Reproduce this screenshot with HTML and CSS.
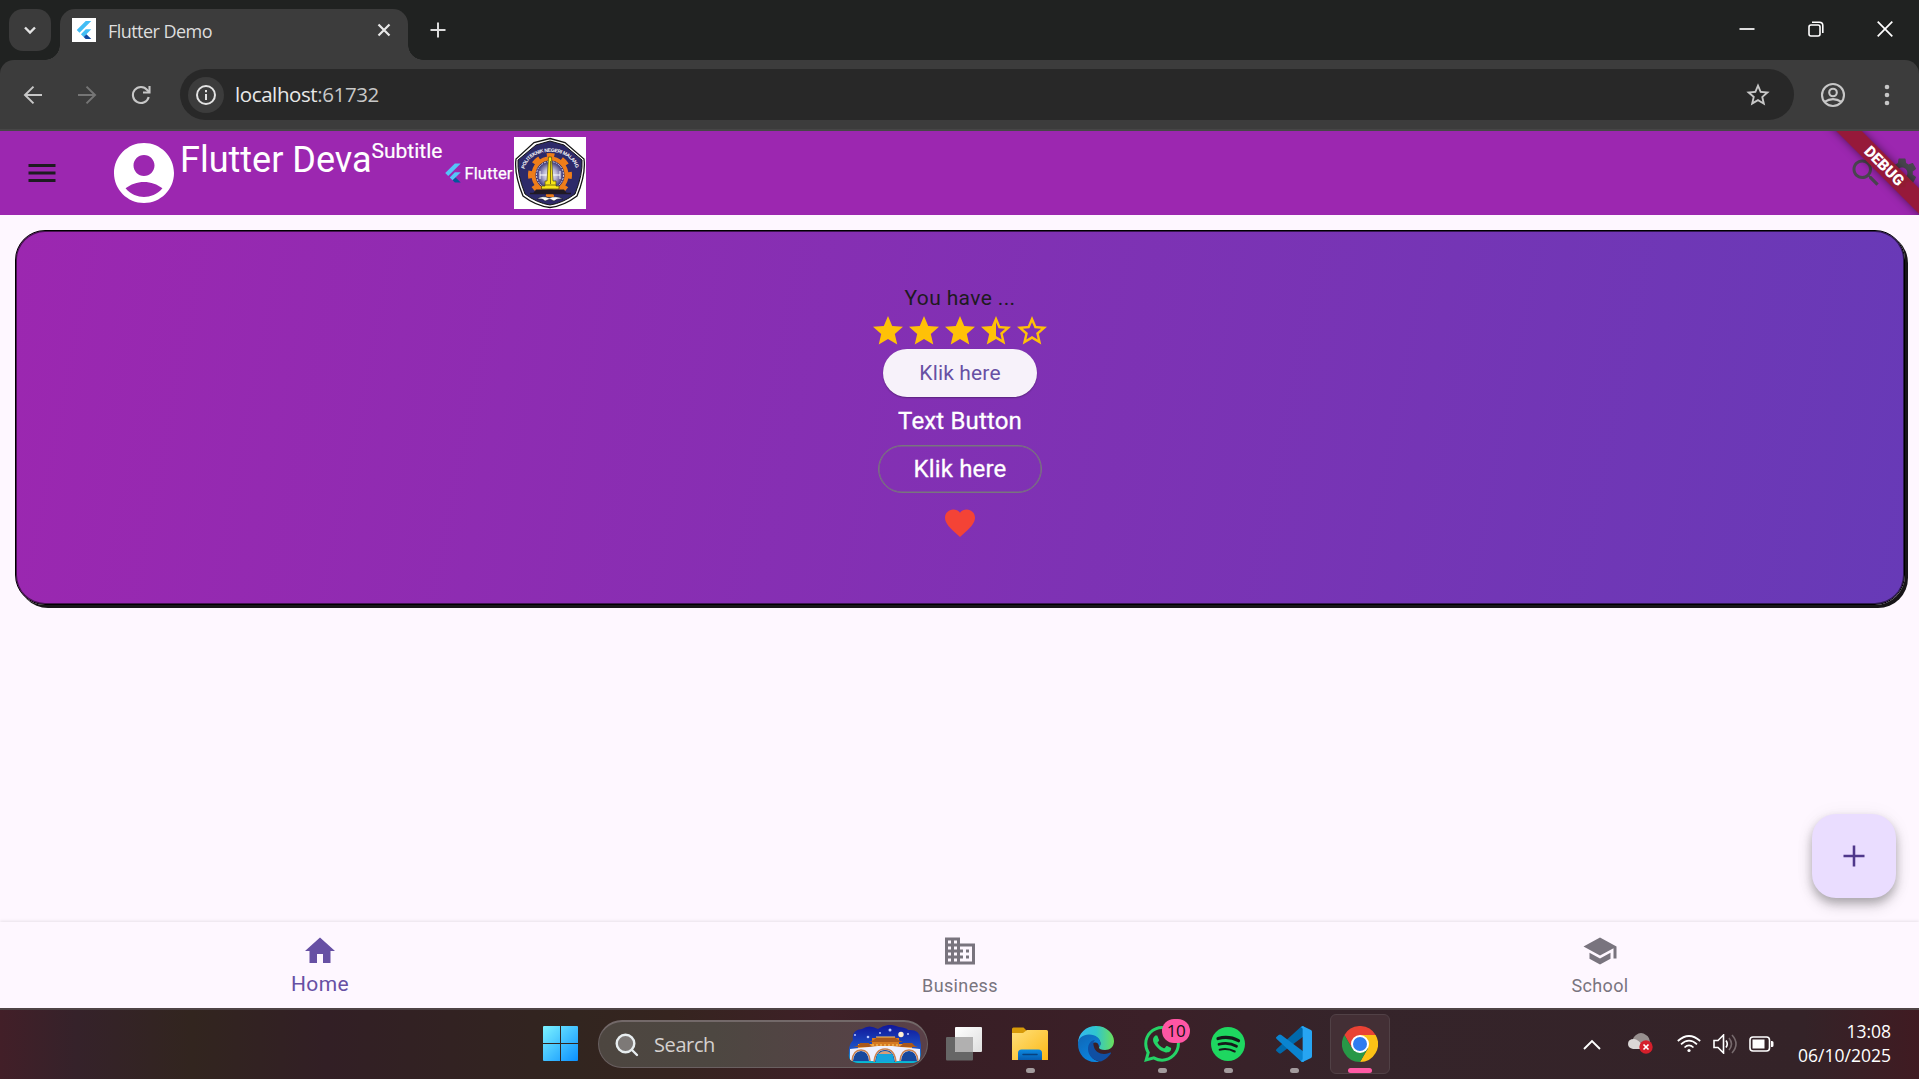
FILE: index.html
```html
<!DOCTYPE html>
<html lang="en">
<head>
<meta charset="utf-8">
<title>Flutter Demo</title>
<link rel="stylesheet" href="styles.css">
</head>
<body>
<div class="screen">
  <header class="tabs">
    <div class="tab-search"><svg width="14" height="14" viewBox="0 0 14 14"><path d="M2 4.5 7 9.5 12 4.5" fill="none" stroke="#e3e3e3" stroke-width="2.4"/></svg></div>
    <div class="tab">
      <span class="favicon"><svg width="18" height="18" viewBox="0 0 24 24"><path fill="#42bdf5" d="M14.3 0 2.3 12 6 15.7 21.7 0zM14.3 11.1 7.9 17.5l3.7 3.7L21.7 11.1z"/><path fill="#0d47a1" d="m11.6 21.2 2.7 2.8h7.4l-6.5-6.5z"/></svg></span>
      <span class="tab-title">Flutter Demo</span>
      <svg class="tab-close" width="14" height="14" viewBox="0 0 14 14"><path d="m1.500 1.500 11 11m0-11-11 11" stroke="#e8e8e8" stroke-width="2.200"/></svg>
    </div>
    <svg class="new-tab" width="16" height="16" viewBox="0 0 16 16"><path d="M8 .5v15M.5 8h15" stroke="#dcdcdc" stroke-width="2"/></svg>
    <div class="window-controls">
      <svg width="16" height="16" viewBox="0 0 16 16"><path d="M.5 8h15" stroke="#fff" stroke-width="1.700"/></svg>
      <svg width="16" height="16" viewBox="0 0 16 16" fill="none" stroke="#fff" stroke-width="1.600"><rect x="1" y="4" width="11" height="11" rx="2"/><path d="M4 1.300h7.500q3.300 0 3.300 3.300V12"/></svg>
      <svg width="16" height="16" viewBox="0 0 16 16"><path d="m.7.7 14.600 14.600m0-14.600L.7 15.300" stroke="#fff" stroke-width="1.700"/></svg>
    </div>
  </header>

  <nav class="toolbar">
    <svg class="tool" width="20" height="20" viewBox="0 0 20 20" fill="none" stroke="#c7c7c7" stroke-width="2"><path d="M19 10H2.500M10.500 1.600 2 10l8.500 8.400"/></svg>
    <svg class="tool" width="20" height="20" viewBox="0 0 20 20" fill="none" stroke="#757575" stroke-width="2"><path d="M1 10h16.500M9.500 1.600 18 10l-8.500 8.400"/></svg>
    <svg class="tool" width="20" height="20" viewBox="0 0 20 20" fill="none" stroke="#c7c7c7" stroke-width="2.100"><path d="M17.700 12A8 8 0 1 1 16.200 5l2 2"/><path d="M18.500 1v6.500H12"/></svg>
    <div class="address">
      <span class="site-info"><svg width="22" height="22" viewBox="0 0 22 22"><circle cx="11" cy="11" r="9" fill="none" stroke="#e3e3e3" stroke-width="2"/><path d="M11 10v6M11 6v2.200" stroke="#e3e3e3" stroke-width="2"/></svg></span>
      <span class="url">localhost<span class="port">:61732</span></span>
      <svg class="bookmark" width="28" height="28" viewBox="0 0 24 24" fill="#c7c7c7"><path d="m22 9.240-7.190-.62L12 2 9.190 8.630 2 9.240l5.460 4.730L5.820 21 12 17.270 18.180 21l-1.630-7.030L22 9.240zM12 15.400l-3.760 2.270 1-4.280-3.320-2.880 4.380-.38L12 6.100l1.710 4.040 4.380.38-3.320 2.880 1 4.280L12 15.400z"/></svg>
    </div>
    <svg class="profile" width="26" height="26" viewBox="0 0 26 26" fill="none" stroke="#c7c7c7" stroke-width="2.100"><circle cx="13" cy="13" r="11"/><circle cx="13" cy="10.500" r="3.800"/><path d="M4.500 19.800q8.500-5.400 17 0"/></svg>
    <svg class="more" width="6" height="22" viewBox="0 0 6 22" fill="#c7c7c7"><circle cx="3" cy="3" r="2.300"/><circle cx="3" cy="11" r="2.300"/><circle cx="3" cy="19" r="2.300"/></svg>
  </nav>

  <section class="appbar">
    <svg class="menu" width="36" height="36" viewBox="0 0 24 24" fill="#1d1b20"><path d="M3 18h18v-2H3v2zm0-5h18v-2H3v2zm0-7v2h18V6H3z"/></svg>
    <svg class="account" width="72" height="72" viewBox="0 0 24 24" fill="#fff"><path d="M12 2C6.480 2 2 6.480 2 12s4.480 10 10 10 10-4.480 10-10S17.520 2 12 2zm0 4c1.930 0 3.500 1.570 3.500 3.500S13.930 13 12 13s-3.500-1.570-3.500-3.500S10.070 6 12 6zm0 14c-2.030 0-4.430-.82-6.140-2.880C7.550 15.800 9.680 15 12 15s4.450.8 6.140 2.120C16.430 19.180 14.030 20 12 20z"/></svg>
    <span class="app-title">Flutter Deva</span>
    <span class="app-subtitle">Subtitle</span>
    <span class="brand"><svg width="16" height="20" viewBox="2 0 20 24"><path fill="#54c5f8" d="M14.300 0 2.300 12 6 15.700 21.700 0zM14.300 11.100 7.900 17.500l3.700 3.700L21.700 11.100z"/><path fill="#01579b" d="m11.600 21.200 2.700 2.800h7.400l-6.500-6.500z"/></svg><span class="brand-name">Flutter</span></span>
    <svg class="crest" width="72" height="72" viewBox="0 0 72 72">
      <defs>
        <path id="crest-arc" d="M10.500 32C15 9 57 9 62 32"/>
        <radialGradient id="globe"><stop offset="0" stop-color="#fff"/><stop offset=".5" stop-color="#b6b3d2"/><stop offset="1" stop-color="#393476"/></radialGradient>
      </defs>
      <rect width="72" height="72" fill="#fff"/>
      <path d="M36 1.500 51 5.500 70 22Q72 37 63 59 50 69 36 70.500 22 69 9 59 0 37 2 22L20 5.500Z" fill="#fff" stroke="#141414" stroke-width="1.300"/>
      <path d="M36 4 50 8 68 23Q69 37 61 57 49 66 36 68 23 66 11 57 3 37 4 23L22 8Z" fill="#2d2a69" stroke="#141414"/>
      <circle cx="36" cy="38" r="16" fill="none" stroke="#ee7d1a" stroke-width="5"/>
      <circle cx="36" cy="38" r="19.500" fill="none" stroke="#ee7d1a" stroke-width="5" stroke-dasharray="7.500 7.815" stroke-dashoffset="3.750"/>
      <circle cx="36" cy="38" r="14.500" fill="#2d2a69"/>
      <circle cx="36" cy="38" r="13.500" fill="url(#globe)" stroke="#fff" stroke-width=".8" stroke-dasharray="2 1"/>
      <path d="M26 34v8m0-4h20m0-4v8" stroke="#fff" fill="none"/>
      <path d="m34.500 20h3l1.500 24h3v5h3v3H27.500v-3H31v-5h2z" fill="#f8e518" stroke="#4e4710" stroke-width=".7"/>
      <path d="M36.500 24v23M31 48h11" stroke="#7d7210"/>
      <path d="M22 52.500h28l3 4H19z" fill="#201a24"/><path d="M16 56.500h41" stroke="#201a24" stroke-width="1.500"/>
      <path d="M23 62q5-4 12-1 7-3 14 1-6-1-9 2l-4-2-5 2q-2-3-8-2" fill="#fff" stroke="#111" stroke-width=".5"/>
      <path d="M33 59h7" stroke="#ee7d1a" stroke-width="1.500"/>
      <text class="crest-text"><textPath href="#crest-arc" textLength="66">POLITEKNIK NEGERI MALANG</textPath></text>
    </svg>
    <svg class="action-search" width="36" height="36" viewBox="0 0 24 24" fill="#49454f"><path d="M15.500 14h-.79l-.28-.27C15.410 12.590 16 11.110 16 9.500 16 5.910 13.090 3 9.500 3S3 5.910 3 9.500 5.910 16 9.500 16c1.610 0 3.090-.59 4.230-1.570l.27.28v.79l5 4.990L20.490 19l-4.990-5zm-6 0C7.010 14 5 11.990 5 9.500S7.010 5 9.500 5 14 7.010 14 9.500 11.990 14 9.500 14z"/></svg>
    <svg class="action-settings" width="36" height="36" viewBox="0 0 24 24" fill="#49454f"><path d="M19.140 12.940c.04-.3.060-.61.060-.94 0-.32-.02-.64-.07-.94l2.030-1.580c.18-.14.230-.41.120-.61l-1.920-3.320c-.12-.22-.37-.29-.59-.22l-2.390.960c-.5-.38-1.030-.7-1.620-.94l-.36-2.540c-.04-.24-.24-.41-.48-.41h-3.840c-.24 0-.43.170-.47.410l-.36 2.540c-.59.240-1.130.57-1.620.94l-2.390-.96c-.22-.08-.47 0-.59.220L2.740 8.870c-.12.210-.08.470.12.610l2.030 1.580c-.05.300-.09.630-.09.940s.02.640.07.940l-2.030 1.580c-.18.140-.23.410-.12.610l1.920 3.320c.12.220.37.290.59.220l2.390-.96c.5.380 1.030.7 1.620.94l.36 2.540c.05.240.24.410.48.410h3.840c.24 0 .44-.17.470-.41l.36-2.540c.59-.24 1.130-.56 1.620-.94l2.390.96c.22.080.47 0 .59-.22l1.920-3.320c.12-.22.070-.47-.12-.61l-2.010-1.580zM12 15.600c-1.980 0-3.600-1.620-3.600-3.600s1.620-3.600 3.600-3.600 3.600 1.620 3.600 3.600-1.620 3.600-3.600 3.600z"/></svg>
    <div class="ribbon-area"><div class="ribbon">DEBUG</div></div>
  </section>

  <main class="content">
    <section class="card">
      <p class="you-have">You have ...</p>
      <div class="stars">
        <svg width="36" height="36" viewBox="0 0 24 24"><path d="M12 17.270 18.180 21l-1.640-7.030L22 9.240l-7.190-.61L12 2 9.190 8.630 2 9.240l5.460 4.730L5.820 21z"/></svg>
        <svg width="36" height="36" viewBox="0 0 24 24"><path d="M12 17.270 18.180 21l-1.640-7.030L22 9.240l-7.190-.61L12 2 9.190 8.630 2 9.240l5.460 4.730L5.820 21z"/></svg>
        <svg width="36" height="36" viewBox="0 0 24 24"><path d="M12 17.270 18.180 21l-1.640-7.030L22 9.240l-7.190-.61L12 2 9.190 8.630 2 9.240l5.460 4.730L5.820 21z"/></svg>
        <svg width="36" height="36" viewBox="0 0 24 24"><path d="m22 9.240-7.190-.62L12 2 9.190 8.630 2 9.240l5.460 4.730L5.820 21 12 17.270 18.180 21l-1.630-7.030L22 9.240zM12 15.400V6.100l1.710 4.040 4.380.38-3.320 2.880 1 4.280L12 15.400z"/></svg>
        <svg width="36" height="36" viewBox="0 0 24 24"><path d="m22 9.240-7.190-.62L12 2 9.190 8.630 2 9.240l5.460 4.730L5.820 21 12 17.270 18.180 21l-1.630-7.030L22 9.240zM12 15.400l-3.760 2.270 1-4.280-3.320-2.880 4.380-.38L12 6.100l1.710 4.040 4.380.38-3.320 2.880 1 4.280L12 15.400z"/></svg>
      </div>
      <button class="btn elevated">Klik here</button>
      <button class="btn text">Text Button</button>
      <button class="btn outlined">Klik here</button>
      <svg class="heart" width="36" height="36" viewBox="0 0 24 24" fill="#f44336"><path d="m12 21.350-1.450-1.320C5.400 15.360 2 12.280 2 8.500 2 5.420 4.420 3 7.500 3c1.740 0 3.410.81 4.500 2.090C13.090 3.810 14.760 3 16.500 3 19.580 3 22 5.420 22 8.500c0 3.780-3.400 6.860-8.550 11.540L12 21.350z"/></svg>
    </section>
    <button class="fab"><svg width="36" height="36" viewBox="0 0 24 24" fill="none" stroke="#4f378b" stroke-width="1.700"><path d="M12 5v14M5 12h14"/></svg></button>
  </main>

  <nav class="bottom-nav">
    <div class="destination active"><svg width="36" height="36" viewBox="0 0 24 24"><path d="M10 20v-6h4v6h5v-8h3L12 3 2 12h3v8z"/></svg><span>Home</span></div>
    <div class="destination"><svg width="36" height="36" viewBox="0 0 24 24"><path d="M12 7V3H2v18h20V7H12zM6 19H4v-2h2v2zm0-4H4v-2h2v2zm0-4H4V9h2v2zm0-4H4V5h2v2zm4 12H8v-2h2v2zm0-4H8v-2h2v2zm0-4H8V9h2v2zm0-4H8V5h2v2zm10 12h-8v-2h2v-2h-2v-2h2v-2h-2V9h8v10zm-2-8h-2v2h2v-2zm0 4h-2v2h2v-2z"/></svg><span>Business</span></div>
    <div class="destination"><svg width="36" height="36" viewBox="0 0 24 24"><path d="M5 13.180v4L12 21l7-3.820v-4L12 17l-7-3.820zM12 3 1 9l11 6 9-4.910V17h2V9L12 3z"/></svg><span>School</span></div>
  </nav>

  <footer class="taskbar">
    <div class="app start"><svg width="35" height="35" viewBox="0 0 35 35"><defs><linearGradient id="win" x1="0" y1="0" x2="35" y2="35" gradientUnits="userSpaceOnUse"><stop stop-color="#7cf3ff"/><stop offset="1" stop-color="#0a90ff"/></linearGradient></defs><path fill="url(#win)" d="M1 0h16v17H0V1q0-1 1-1zm17 0h16q1 0 1 1v16H18zM0 18h17v17H1q-1 0-1-1zm18 0h17v16q0 1-1 1H18z"/></svg></div>
    <div class="search">
      <svg width="24" height="24" viewBox="0 0 24 24" fill="none" stroke="#e8eef0" stroke-width="2.400" stroke-linecap="round"><circle cx="10.500" cy="10.500" r="8.800" fill="#7d7977"/><path d="m17 17 5 5"/></svg>
      <span class="search-label">Search</span>
      <svg class="scene" width="73" height="40" viewBox="0 0 73 40">
        <defs><linearGradient id="night" x2="0" y2="1"><stop stop-color="#10169a"/><stop offset=".6" stop-color="#1d55c8"/><stop offset="1" stop-color="#08c4d6"/></linearGradient><clipPath id="cloud"><path d="M5 15Q3 5 14 4q7-5 16 0 10-7 21-2 8 1 9 3 13-1 12 10 3 11 0 18 0 5-12 5H14Q-1 38 1 28q-1-7 4-13z"/></clipPath></defs>
        <g clip-path="url(#cloud)">
          <rect width="73" height="40" fill="url(#night)"/>
          <path d="M10 19h54v6H10z" fill="#ef9a38"/><path d="M24 13h27v9H24z" fill="#d67a22"/>
          <path d="M21 17q6-2 8-5h18q2 3 8 5zM5 22q6-1 7-4h9q1 3 5 4zm44 0q5-1 6-4h9q2 3 6 4z" fill="#a9581b"/>
          <path d="M28 12h19" stroke="#ffc45c" stroke-width="1.200"/><path d="M24 20h28M10 24h54" stroke="#ffd36e" stroke-dasharray="2 2"/>
          <path d="M2 24 30 21h14l28 3v12H2z" fill="#eef0ff"/>
          <path d="M27 40q0-15 10-15t10 15zM5 36q1-10 8-10t8 10zm48 0q1-10 8-10t8 10z" fill="#17489d"/>
          <path d="M26 38q1-14 11-14t11 14M4 36q1-11 9-11t9 11m30 0q1-11 9-11t9 11" fill="none" stroke="#c98250" stroke-width="1.500"/>
          <path d="M29 30q8-8 16 0l2 10H27z" fill="#15a5dd"/><path d="M30 29q7-6 14 0z" fill="#d79c78"/>
          <path d="M0 37h73v3H0z" fill="#07bed0"/>
        </g>
        <circle cx="53" cy="9.500" r="2.700" fill="#ffefd2"/><g fill="#b9c7ff"><circle cx="42" cy="5" r="1.500"/><circle cx="32" cy="8" r="1"/><circle cx="7" cy="10" r="1"/><circle cx="20" cy="12" r="1.300"/><circle cx="60" cy="9" r="1"/></g>
      </svg>
    </div>
    <div class="app"><svg width="36" height="34" viewBox="0 0 36 34"><defs><linearGradient id="pane" x2="1" y2="1"><stop stop-color="#fff"/><stop offset="1" stop-color="#dedede"/></linearGradient></defs><rect y="10" width="27" height="23.500" rx="1" fill="#666"/><rect x="9" y="0" width="27" height="25" rx="1" fill="url(#pane)"/><path d="M9 10h18v15H10q-1 0-1-1z" fill="#b1b0b0"/></svg></div>
    <div class="app running"><svg width="36" height="34" viewBox="0 0 36 34"><defs><linearGradient id="folder" x2="1" y2="1"><stop stop-color="#ffe07a"/><stop offset="1" stop-color="#fbb816"/></linearGradient><linearGradient id="tray" x2="0" y2="1"><stop stop-color="#0c8ae0"/><stop offset="1" stop-color="#075cb0"/></linearGradient></defs><path d="M0 10V2q0-1.500 1.500-1.500h10L15 4v6z" fill="#d79a08"/><path d="M0 6h11l4-3h19.500Q36 3 36 4.500V33H0z" fill="url(#folder)"/><path d="M6 33v-7q0-3.500 3.500-3.500h17q3.500 0 3.500 3.500v7z" fill="url(#tray)"/><path d="M11 27.500h14" stroke="#07417f" stroke-width="1.500" stroke-linecap="round"/></svg></div>
    <div class="app"><svg width="36" height="36" viewBox="0 0 36 36"><defs><linearGradient id="edge-top" x2="1"><stop stop-color="#35b9f1"/><stop offset=".5" stop-color="#2fc5cf"/><stop offset="1" stop-color="#6be05b"/></linearGradient><linearGradient id="edge-side" x2=".6" y2="1"><stop stop-color="#1066b5"/><stop offset="1" stop-color="#0a84df"/></linearGradient></defs><path d="M0 18C0 7 8 0 18 0c11 0 18 8 18 15 0 6-4 9-9 9-4 0-6-1-6-2.500 0-1 1.500-1.500 1.500-4 0-4-4-8-10-8C6 9.500 1 13 0 18z" fill="url(#edge-top)"/><path d="M0 18c0-6 5-9.500 11-9.500 7 0 11.500 4 11.500 9 0 3-1.500 3-1.500 4 0-4-2-5-4-5-4 0-6 3-6 7 0 7 6 12 11 12Q18.500 36 17 36C7 36 0 28 0 18z" fill="url(#edge-side)"/><path d="M10 23c0-5 3-9 7-9-2 2-2 4-1 7 1 4 5 7 10 7 4 0 6-2 7-1.500.7.500-3 6-10 9C16 35 10 30 10 23z" fill="#104fa3"/></svg></div>
    <div class="app running"><svg width="36" height="36" viewBox="0 0 24 24" fill="#25d366"><path d="M17.472 14.382c-.297-.149-1.758-.867-2.030-.967-.273-.099-.471-.148-.67.150-.197.297-.767.966-.940 1.164-.173.199-.347.223-.644.075-.297-.150-1.255-.463-2.390-1.475-.883-.788-1.480-1.761-1.653-2.059-.173-.297-.018-.458.130-.606.134-.133.298-.347.446-.520.149-.174.198-.298.298-.497.099-.198.050-.371-.025-.520-.075-.149-.669-1.612-.916-2.207-.242-.579-.487-.500-.669-.510-.173-.008-.371-.010-.570-.010-.198 0-.520.074-.792.372-.272.297-1.040 1.016-1.040 2.479 0 1.462 1.065 2.875 1.213 3.074.149.198 2.096 3.200 5.077 4.487.709.306 1.262.489 1.694.625.712.227 1.360.195 1.871.118.571-.085 1.758-.719 2.006-1.413.248-.694.248-1.289.173-1.413-.074-.124-.272-.198-.570-.347m-5.421 7.403h-.004a9.870 9.870 0 0 1-5.031-1.378l-.361-.214-3.741.982.998-3.648-.235-.374a9.860 9.860 0 0 1-1.510-5.260c.001-5.450 4.436-9.884 9.888-9.884 2.640 0 5.122 1.030 6.988 2.898a9.825 9.825 0 0 1 2.893 6.994c-.003 5.450-4.437 9.884-9.885 9.884m8.413-18.297A11.815 11.815 0 0 0 12.050 0C5.495 0 .160 5.335.157 11.892c0 2.096.547 4.142 1.588 5.945L.057 24l6.305-1.654a11.882 11.882 0 0 0 5.683 1.448h.005c6.554 0 11.890-5.335 11.893-11.893a11.821 11.821 0 0 0-3.480-8.413z"/></svg><span class="badge">10</span></div>
    <div class="app running"><svg width="34" height="34" viewBox="0 0 34 34"><circle cx="17" cy="17" r="17" fill="#1ed760"/><g fill="none" stroke="#15191a" stroke-linecap="round"><path d="M7 11.500q11-3 20.500 2.200" stroke-width="3.200"/><path d="M8 17.300q9.500-2.500 17.500 2" stroke-width="2.700"/><path d="M8.700 22.700q8-2 15 1.800" stroke-width="2.100"/></g></svg></div>
    <div class="app running"><svg width="36" height="36" viewBox="0 0 108 108"><path d="M2 69 74 3q4-4 10-2v29L16 81q-4 3-8 0l-6-5q-4-3 0-7z" fill="#0069ab"/><path d="M2 39 74 105q4 4 10 2V78L16 27q-4-3-8 0l-6 5q-4 3 0 7z" fill="#0a84d0"/><path d="m80 0 25 12q3 2 3 5v74q0 3-3 5l-25 12q-5-1-6-4 5 0 6-5V9q-1-5-6-5z" fill="#27a5f2"/></svg></div>
    <div class="app running current"><svg width="36" height="36" viewBox="0 0 108 108"><path d="M7.200 27A54 54 0 0 1 100.800 27H54V54L30.600 67.500z" fill="#e94234"/><path d="M100.800 27A54 54 0 0 1 54 108L77.400 67.500 54 54V27z" fill="#fbc116"/><path d="M54 108A54 54 0 0 1 7.200 27L30.600 67.500 54 54 77.400 67.500z" fill="#279847"/><circle cx="54" cy="54" r="27" fill="#fff"/><circle cx="54" cy="54" r="21" fill="#2f7cf0"/></svg></div>
    <div class="tray">
      <svg class="chevron" width="18" height="11" viewBox="0 0 18 11"><path d="m1 10 8-8 8 8" fill="none" stroke="#fff" stroke-width="1.900"/></svg>
      <svg class="cloud" width="26" height="22" viewBox="0 0 26 22"><path d="M4 9q1-5 4-7 5-4 10 0 4 2 4 9l-8 4z" fill="#98908f"/><path d="M5 16q-5-1-5-5 0-5 6-5 4 0 10 8l-3 2z" fill="#dad7d6"/><circle cx="18" cy="14" r="6.700" fill="#d51f2b"/><path d="m15.500 11.500 5 5m0-5-5 5" stroke="#fff" stroke-width="1.700"/></svg>
      <svg class="wifi" width="24" height="18" viewBox="0 0 24 18" fill="none" stroke="#fff" stroke-width="1.700"><path d="M.8 6Q12-4 23.200 6M4 9.300q8-7.500 16 0M7.500 12.500q4.500-4.200 9 0"/><circle cx="12" cy="15.500" r="1.600" fill="#fff" stroke="none"/></svg>
      <svg class="volume" width="25" height="20" viewBox="0 0 25 20" fill="none" stroke="#fff" stroke-width="1.600"><path d="M1 6.500h4L10.500 1v18L5 13.500H1zM13 6.500q2.500 3.500 0 7"/><path d="M16 4q5 6 0 12M19 1q8 9 0 18" stroke="#776a6d"/></svg>
      <svg class="battery" width="25" height="16" viewBox="0 0 25 16"><rect x="1" y="1" width="19.500" height="14" rx="3" fill="none" stroke="#fff" stroke-width="1.600"/><path d="M3.500 3.500h12v9h-12zM22 5h1q1.500 0 1.500 1.500v3Q24.500 11 23 11h-1z" fill="#fff"/></svg>
      <div class="clock"><span>13:08</span><span>06/10/2025</span></div>
    </div>
  </footer>
</div>
</body>
</html>
```
FILE: styles.css
```css
* { box-sizing: border-box; }
body { margin: 0; background: #202221; font-family: Roboto, "Liberation Sans", sans-serif; overflow: hidden; }
svg { display: block; flex: none; }
button { border: 0; font-family: inherit; }
.screen { display: flex; flex-direction: column; width: 1919px; height: 1079px; }

/* Browser tab strip */
.tabs { display: flex; height: 60px; background: #202221; padding-left: 9px; font-family: "Open Sans", "Noto Sans", sans-serif; }
.tab-search { width: 42px; height: 42px; margin-top: 9px; border-radius: 14px; background: #3b3b3b; display: grid; place-items: center; }
.tab { position: relative; display: flex; align-items: center; width: 348px; height: 51px; margin: 9px 0 0 9px; padding: 0 17px 9px 12px; border-radius: 15px 15px 0 0; background: #3c3c3c; }
.tab::before, .tab::after { content: ""; position: absolute; bottom: 0; width: 15px; height: 15px; }
.tab::before { left: -15px; background: radial-gradient(circle at 0 0, transparent 14.5px, #3c3c3c 15px); }
.tab::after { right: -15px; background: radial-gradient(circle at 100% 0, transparent 14.5px, #3c3c3c 15px); }
.favicon { display: grid; place-items: center; width: 24px; height: 24px; background: #fff; }
.tab-title { margin-left: 12px; font-size: 18px; line-height: 24px; color: #dedede; padding-top: 2px; letter-spacing: -.550px; }
.tab-close { margin-left: auto; }
.new-tab { margin: 22px 0 0 22px; }
.window-controls { display: flex; gap: 53px; margin: 21px 26px 0 auto; }

.toolbar { display: flex; align-items: center; height: 71px; padding: 0 29px 0 23px; background: #3c3c3c; border-bottom: 2px solid #464646; border-radius: 14px 14px 0 0; }
.tool { margin-right: 34px; }
.address { display: flex; align-items: center; width: 1614px; height: 51px; margin: 0 26px 0 -5px; padding: 0 22px 0 8px; border-radius: 26px; background: #282828; }
.site-info { display: grid; place-items: center; width: 36px; height: 36px; border-radius: 50%; background: #3c3c3c; }
.url { margin-left: 11px; padding-bottom: 2px; font: 20.5px/28px "Open Sans", "Noto Sans", sans-serif; letter-spacing: -.4px; color: #e8e8e8; }
.port { color: #c7c7c7; }
.bookmark { margin-left: auto; }
.more { margin-left: auto; }

/* Application bar */
.appbar { position: relative; display: flex; align-items: center; height: 84px; padding-left: 24px; background: #9c27b0; color: #fff; z-index: 2; }
.account { margin-left: 48px; }
.app-title { align-self: flex-start; margin-top: 7px; font-size: 36px; line-height: 44px; }
.app-subtitle { align-self: flex-start; margin-top: 6px; font-size: 21px; line-height: 28px; -webkit-text-stroke: .2px #fff; }
.brand { display: flex; align-items: center; gap: 3px; width: 69px; margin-left: 3px; }
.brand-name { font-size: 16.500px; line-height: 20px; letter-spacing: .1px; -webkit-text-stroke: .25px #fff; padding-top: 1px; }
.crest-text { font: 700 5px "Liberation Sans", sans-serif; fill: #fff; }
.action-search { margin-left: auto; }
.action-search, .action-settings { position: relative; left: 1px; }
.ribbon-area { position: absolute; top: 0; right: 0; width: 110px; height: 84px; overflow: hidden; }
.ribbon { position: absolute; left: -15px; top: 26px; width: 180px; height: 18px; transform: rotate(45deg); background: rgba(150, 24, 50, .94); box-shadow: 0 0 9px rgba(0, 0, 0, .5); color: #fff; font-size: 15.300px; font-weight: 900; line-height: 18px; text-align: center; }

.content { position: relative; flex: 1; padding: 15px; background: #fef7ff; }
.card { display: flex; flex-direction: column; align-items: center; width: 1890px; height: 375px; padding: 53px 0 0; border: 1px solid #000; border-radius: 30px; background: linear-gradient(101.200deg, #9c27b0, #673ab7) border-box; box-shadow: 3px 3px 0 #171518, inset 0 0 0 1px rgba(0, 0, 0, .55); }
.you-have { margin: 0; height: 29px; font-size: 21px; line-height: 29px; letter-spacing: .375px; color: #1d1b20; }
.stars { display: flex; height: 36px; fill: #ffc107; }
.btn { display: grid; place-items: center; height: 48px; border-radius: 24px; background: none; color: #fff; font-size: 24px; font-weight: 400; letter-spacing: .15px; padding: 0; -webkit-text-stroke: .3px #fff; }
.elevated { width: 154px; height: 48px; background: #f7f2fa; color: #6750a4; font-size: 21px; letter-spacing: .15px; -webkit-text-stroke: 0; box-shadow: 0 1px 1.500px rgba(0, 0, 0, .3); }
.outlined { width: 164px; border: 1px solid #79747e; box-shadow: inset 0 0 0 .5px #79747e; }
.heart { margin-top: 12px; }
.fab { position: absolute; right: 23px; bottom: 24px; display: grid; place-items: center; width: 84px; height: 84px; border-radius: 24px; background: #eaddff; box-shadow: 0 5px 8px rgba(0, 0, 0, .2), 0 8px 15px rgba(0, 0, 0, .14), 0 1px 20px rgba(0, 0, 0, .05); }

.bottom-nav { position: relative; display: grid; grid-template-columns: repeat(3, 640px); height: 86px; background: #fef7ff; box-shadow: 0 -1px 3px rgba(0, 0, 0, .09); }
.destination { display: flex; flex-direction: column; align-items: center; padding-top: 11px; font-size: 18px; line-height: 24px; letter-spacing: .375px; color: #79747e; fill: #79747e; }
.destination span { margin-top: 5px; }
.active { font-size: 21px; letter-spacing: .375px; color: #6750a4; fill: #6750a4; }
.active span { margin-top: 3px; }

/* Desktop taskbar */
.taskbar { display: flex; height: 71px; padding-left: 527px; border-top: 2px solid #504547; background: linear-gradient(90deg, #421f28, #35222a 4%, #32251f 10%, #321f25 17%, #32251f 30%, #35241f 35%, #3e2027 43%, #381e25 48%, #3b2028 60%, #35242a 70%, #342328 94%, #401b22); }
.app { position: relative; display: grid; place-items: center; width: 66px; height: 69px; }
.app > svg { position: relative; top: -1px; }
.running::after { content: ""; position: absolute; left: 29px; bottom: 6px; width: 9px; height: 5px; border-radius: 3px; background: #a39b9d; }
.current::before { content: ""; position: absolute; inset: 4px 3px 5px; border: 1px solid #514146; border-radius: 6px; background: #432f35; }
.current::after { left: 21px; width: 24px; background: #ff5aa5; }
.badge { position: absolute; left: 33px; top: 9px; width: 28px; height: 24px; border-radius: 12px; background: #ff56a4; color: #111; font: 17px/24px "Open Sans", sans-serif; letter-spacing: -.5px; text-align: center; }
.search { display: flex; align-items: center; width: 330px; height: 48px; margin: 10px 3px 0 5px; padding: 0 6px 0 16px; border: 1px solid #6a6061; border-top: 2px solid #736969; border-radius: 24px; background: linear-gradient(90deg, #4d4640, #4d4741 35%, #5a4048); font-family: "Open Sans", "Noto Sans", sans-serif; }
.search-label { margin-left: 15px; font-size: 20px; letter-spacing: -.4px; color: #d5d1cf; }
.scene { margin-left: auto; }
.tray { display: flex; align-items: center; margin-left: auto; padding: 0 28px 1px 0; }
.cloud { margin-left: 27px; }
.wifi { margin-left: 23px; }
.volume { margin-left: 12px; }
.battery { margin-left: 11px; }
.clock { display: flex; flex-direction: column; align-items: flex-end; width: 94px; margin: -2px 0 0 23px; font: 17.500px/24px "Open Sans", "Noto Sans", sans-serif; color: #fff; letter-spacing: 0; }
```
